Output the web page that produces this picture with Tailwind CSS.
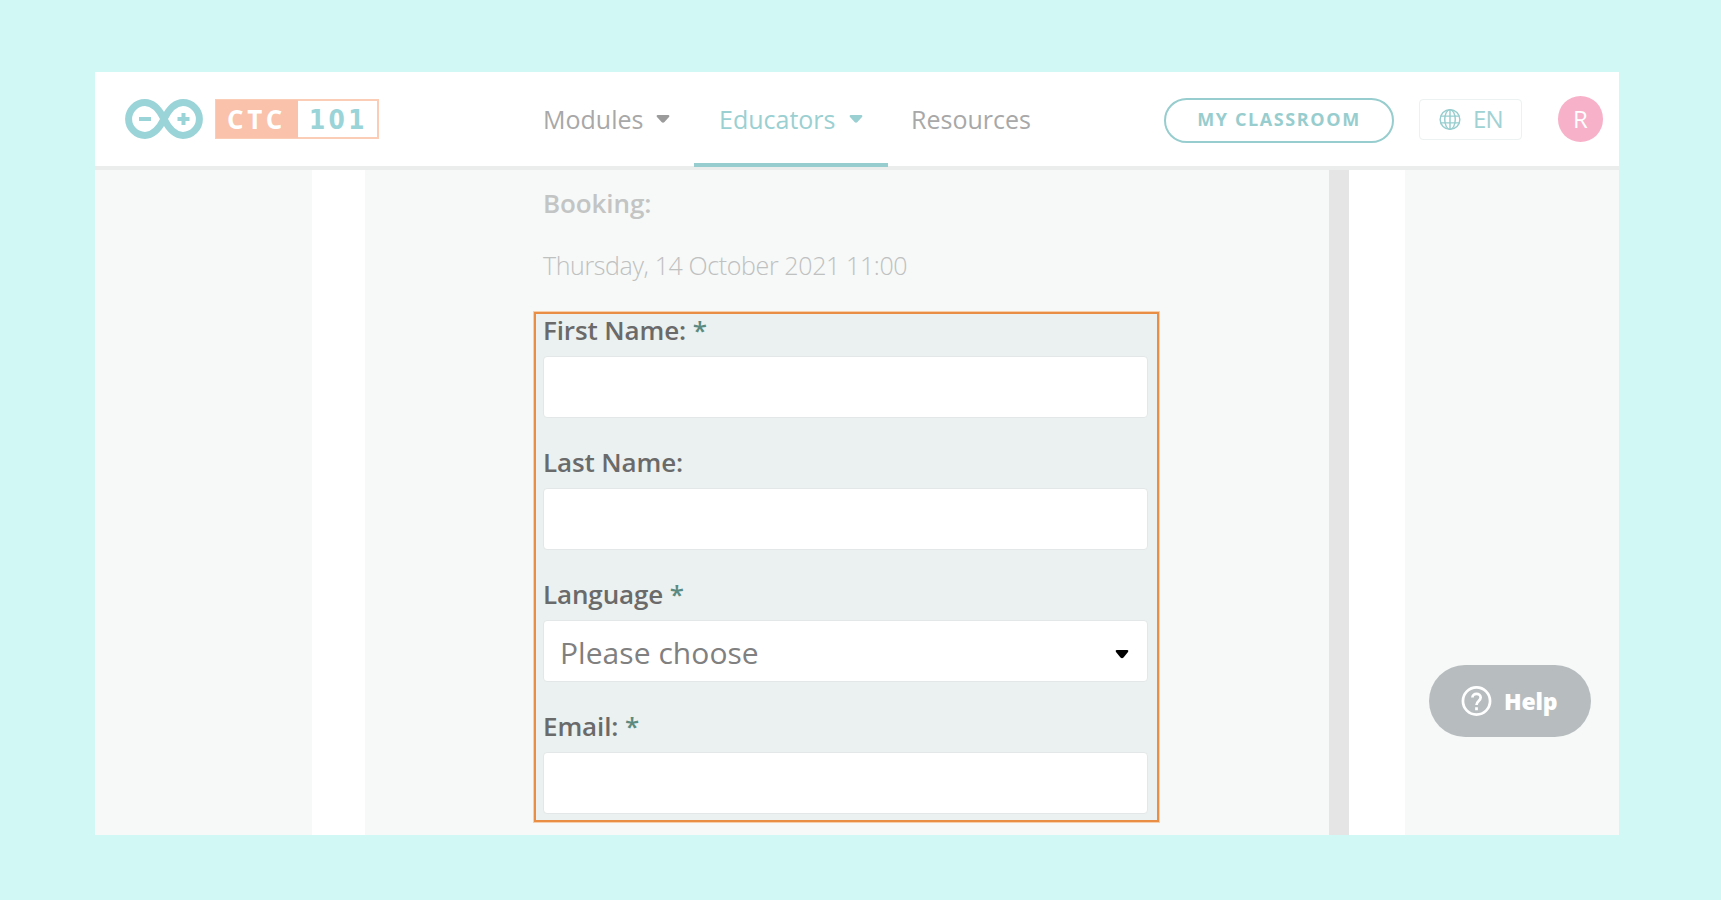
<!DOCTYPE html>
<html lang="en">
<head>
<meta charset="utf-8">
<title>Arduino CTC 101 - Booking</title>
<script src="https://cdn.jsdelivr.net/npm/@tailwindcss/browser@4"></script>
</head>
<body class="h-screen overflow-hidden bg-[#d1f8f5] pl-[95px] pt-[72px] font-['Open_Sans',sans-serif]">
<div class="relative flex h-[763px] w-[1524px] flex-col bg-white">
  <header class="flex h-[94px] shrink-0 items-center whitespace-nowrap">
    <svg class="ml-[30px] h-[40px] w-[78px] shrink-0" viewBox="0 0 78 40" fill="none" stroke="#9ad4d8">
      <path stroke-width="7" d="M39 20C34 10 28 3.600 20 3.600C11 3.600 3.600 11 3.600 20S11 36.400 20 36.400C28 36.400 34 30 39 20C44 10 50 3.600 58 3.600C67 3.600 74.400 11 74.400 20S67 36.400 58 36.400C50 36.400 44 30 39 20Z"/>
      <path stroke-width="4" d="M14 20H26M52.500 20H64.500M58.500 14V26"/>
    </svg>
    <div class="ml-[12px] flex h-[40px] w-[164px] shrink-0 border-2 border-[#fbccb6] text-[26px] font-bold leading-[39px]">
      <span class="-my-px -ml-px w-[82px] bg-[#fac2aa] pl-[11px] tracking-[3.600px] text-white">CTC</span>
      <span class="pl-[11px] font-['DejaVu_Sans_Condensed','DejaVu_Sans'] text-[26px] leading-[39px] tracking-[3.300px] text-[#9ad4d8] [font-stretch:condensed]">101</span>
    </div>
    <nav class="flex h-full shrink-0 text-[25px] leading-[94px] text-[#a8a8a8]">
      <a class="ml-[164px] flex w-[151px] items-center"><span>Modules</span><svg class="ml-auto mr-[24px] h-2 w-[14px]" viewBox="0 0 14 8"><path fill="#9b9b9b" d="M1.500 0h11q1.500.5.500 2L8.500 7q-1.500 1.500-3 0L1 2Q0 .5 1.500 0Z"/></svg></a>
      <a class="relative z-10 flex h-[95px] w-[194px] items-center border-b-4 border-[#97cdce] pl-[25px] pt-[3px] text-[#9bd0d2]"><span>Educators</span><svg class="ml-auto mr-[25px] h-2 w-[14px]" viewBox="0 0 14 8"><path fill="#9bd0d2" d="M1.500 0h11q1.500.5.500 2L8.500 7q-1.500 1.500-3 0L1 2Q0 .5 1.500 0Z"/></svg></a>
      <a class="ml-[23px] w-[253px]">Resources</a>
    </nav>
    <button class="mt-[2px] h-[45px] w-[230px] shrink-0 rounded-full border-2 border-[#97cdce] pb-px text-[18px] font-bold tracking-[1.600px] text-[#97cdce]">MY CLASSROOM</button>
    <div class="ml-[25px] flex h-[41px] w-[103px] shrink-0 items-center rounded-[4px] border border-[#ecf1f1] pl-[19px] text-[24px] text-[#a0d2d4]">
      <svg class="mr-[12px] h-[23px] w-[22px]" viewBox="0 0 23 23" fill="none" stroke="#97cdce" stroke-width="1.500"><circle cx="11.500" cy="11.500" r="10.300"/><ellipse cx="11.500" cy="11.500" rx="5.500" ry="10.300"/><path d="M11.500 1v21M1.500 8h20M1.500 15h20"/></svg>
      <span class="tracking-[-0.800px]">EN</span>
    </div>
    <div class="ml-[36px] flex h-[46px] w-[45px] shrink-0 items-center justify-center rounded-full bg-[#f7b2c9] text-[24px] text-white">R</div>
  </header>
  <div class="flex min-h-0 flex-1">
    <div class="w-[217px] bg-[#f6f9f8]"></div>
    <main class="ml-[53px] w-[964px] bg-[#f6f9f8] pt-[21px] text-[26px] leading-[32px]">
      <h2 class="ml-[178px] h-[62px] font-semibold tracking-[-0.100px] text-[#c3c4c4]">Booking:</h2>
      <p class="ml-[178px] h-[63px] text-[25px] font-light tracking-[-0.380px] text-[#bfc0c0]">Thursday, 14 October 2021 11:00</p>
      <form class="ml-[169px] flex h-[510px] w-[625px] flex-col border-2 border-[#e98f45] bg-[#eaf1f0] pl-[7px] pr-[9px] font-semibold tracking-[-0.120px] text-[#6a6a6a] shadow-[0_0_0_1px_#f7cfab]">
        <label class="mb-[10px] h-8">First Name: <span class="text-[#5b8a80]">*</span></label>
        <div class="mb-[28px] h-[62px] shrink-0 rounded-[4px] border border-[#e4e7e7] bg-white"></div>
        <label class="mb-[10px] h-8">Last Name:</label>
        <div class="mb-[28px] h-[62px] shrink-0 rounded-[4px] border border-[#e4e7e7] bg-white"></div>
        <label class="mb-[10px] h-8">Language <span class="text-[#5b8a80]">*</span></label>
        <div class="mb-[28px] flex h-[62px] shrink-0 items-center rounded-[4px] border border-[#e4e7e7] bg-white pl-[16px] pr-[18px] pt-[4px] text-[30px] font-normal tracking-[0.050px] text-[#808080]"><span>Please choose</span><svg class="ml-auto mt-[2px] h-[9px] w-[14px]" viewBox="0 0 14 9"><path fill="#000" d="M1.500 0h11q1.500.5.500 2L8.500 7.500q-1.500 1.500-3 0L1 2Q0 .5 1.500 0Z"/></svg></div>
        <label class="mb-[10px] h-8">Email: <span class="text-[#5b8a80]">*</span></label>
        <div class="h-[62px] shrink-0 rounded-[4px] border border-[#e4e7e7] bg-white"></div>
      </form>
    </main>
    <div class="w-[20px] bg-[#e5e5e5]"></div>
    <div class="ml-[56px] w-[214px] bg-[#f6f9f8]"></div>
  </div>
  <div class="absolute left-0 top-[94px] h-1 w-full bg-[#ebeded]"></div>
  <button class="absolute left-[1334px] top-[593px] flex h-[72px] w-[162px] items-center rounded-full bg-[#b7bdbf] pl-[32px] text-[23px] font-extrabold text-white">
    <svg class="mr-[12px] h-8 w-[31px]" viewBox="0 0 32 32" fill="none" stroke="#fff" stroke-width="2.800"><circle cx="16" cy="16" r="14"/><path d="M11.800 12.500c0-5 8.500-5 8.500 0 0 3.500-4.300 3.500-4.300 7.500M16 22.500v3"/></svg><span class="tracking-[-0.200px]">Help</span></button>
</div>
</body>
</html>
